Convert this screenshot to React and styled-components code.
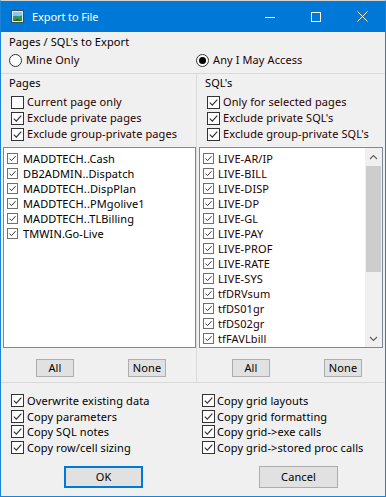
import React from "react";
import styled, { createGlobalStyle } from "styled-components";

const GlobalStyle = createGlobalStyle`
  html, body {
    margin: 0;
    padding: 0;
    background: #ffffff;
  }
  body {
    font-family: "Noto Sans", "Open Sans", sans-serif;
    font-size: 11px;
    letter-spacing: 0.1px;
  }
`;

const Window = styled.div`
  box-sizing: border-box;
  width: 386px;
  height: 497px;
  display: flex;
  flex-direction: column;
  background: #f0f0f0;
  border: 1px solid #1883d7;
  border-top: 1px solid #d4d4d4;
  overflow: hidden;
`;

// title bar

const TitleBar = styled.div`
  flex: none;
  height: 31px;
  display: flex;
  align-items: center;
  background: #0078d7;
  color: #ffffff;
`;

const TitleIcon = styled.svg`
  margin-left: 10px;
  flex: none;
`;

const TitleText = styled.span`
  flex: 1;
  margin-left: 8px;
  font-size: 11px;
  letter-spacing: -0.1px;
  line-height: 16px;
`;

const CaptionButton = styled.div`
  width: 46px;
  height: 31px;
  display: flex;
  align-items: center;
  justify-content: center;
`;

// body

const Body = styled.div`
  flex: 1;
  display: flex;
  flex-direction: column;
  color: #000000;
`;

const ScopeSection = styled.div`
  box-sizing: border-box;
  height: 41px;
  padding: 2px 0 0 8px;
`;

const Heading = styled.div`
  height: 16px;
  line-height: 16px;
  margin-left: ${p => p.$indent || 0}px;
`;

const RadioRow = styled.div`
  display: grid;
  grid-template-columns: 187px 1fr;
  margin-top: 2px;
`;

const RadioOption = styled.label`
  display: flex;
  align-items: center;
  gap: 4px;
  height: 16px;
  line-height: 16px;
  color: #2a0000;
`;

const RadioCircle = styled.span`
  box-sizing: border-box;
  width: 13px;
  height: 13px;
  border-radius: 50%;
  border: 1px solid #333333;
  background: #ffffff;
  display: flex;
  align-items: center;
  justify-content: center;
  flex: none;
  &::after {
    content: "";
    width: 7px;
    height: 7px;
    border-radius: 50%;
    background: ${p => (p.$on ? "#000000" : "transparent")};
  }
`;

const Panels = styled.div`
  display: grid;
  grid-template-columns: 196px 1fr;
  border-top: 1px solid #dadada;
  border-bottom: 1px solid #dadada;
`;

const Panel = styled.div`
  display: flex;
  flex-direction: column;
  padding: 1px 0 5px 2px;
  border-right: ${p => (p.$divider ? "1px solid #dadada" : "none")};
`;

const PanelChecks = styled.div`
  margin: 3px 0 0 8px;
`;

const CheckRow = styled.div`
  display: flex;
  align-items: center;
  gap: ${p => p.$gap || 3}px;
  height: ${p => p.$h || 16}px;
  line-height: ${p => p.$h || 16}px;
  color: ${p => p.$tone || "#000000"};
  white-space: nowrap;
`;

const Box = styled.span`
  box-sizing: border-box;
  width: ${p => p.$size}px;
  height: ${p => p.$size}px;
  border: 1px solid ${p => p.$edge};
  background: #ffffff;
  display: flex;
  align-items: center;
  justify-content: center;
  flex: none;
`;

const ListBox = styled.div`
  box-sizing: border-box;
  width: ${p => p.$w}px;
  height: 201px;
  margin-top: 5px;
  background: #ffffff;
  border: 1px solid #828790;
  display: flex;
  overflow: hidden;
`;

const ListItems = styled.div`
  flex: 1;
  padding: 3px 0 0 3px;
`;

const ScrollBar = styled.div`
  width: 17px;
  display: flex;
  flex-direction: column;
  background: #f0f0f0;
`;

const ScrollArrow = styled.div`
  height: 17px;
  display: flex;
  align-items: center;
  justify-content: center;
  flex: none;
`;

const ScrollTrack = styled.div`
  flex: 1;
  padding-top: 1px;
`;

const ScrollThumb = styled.div`
  height: 106px;
  margin: 0 1px;
  background: #cdcdcd;
`;

const ButtonRow = styled.div`
  display: flex;
  gap: 54px;
  margin: 11px 0 0 33px;
`;

const Button = styled.div`
  box-sizing: border-box;
  width: ${p => p.$w}px;
  height: ${p => p.$h}px;
  display: flex;
  align-items: center;
  justify-content: center;
  background: #e1e1e1;
  border: ${p => (p.$default ? "2px solid #0078d7" : "1px solid #adadad")};
  color: #000000;
  line-height: 16px;
`;

const Options = styled.div`
  display: grid;
  grid-template-columns: 196px 1fr;
  padding-top: 10px;
`;

const OptionColumn = styled.div`
  padding-left: ${p => p.$pad}px;
`;

const FooterCell = styled.div`
  margin: 11px 0 0 ${p => p.$left}px;
`;

const Check = ({ label, on, size = 13, edge = "#333333", tone, h, gap }) => (
  <CheckRow $tone={tone} $h={h} $gap={gap}>
    <Box $size={size} $edge={edge}>
      {on && (
        <svg width={size - 2} height={size - 2} viewBox="0 0 11 11">
          <path d="M1.8 5.6 L4.3 8.1 L9.3 2.6" fill="none" stroke="#333333" strokeWidth="1.2" />
        </svg>
      )}
    </Box>
    {label}
  </CheckRow>
);

const Chevron = ({ up }) => (
  <svg width="9" height="6" viewBox="0 0 9 6">
    <path d={up ? "M1 5 L4.5 1.5 L8 5" : "M1 1 L4.5 4.5 L8 1"} fill="none" stroke="#606060" strokeWidth="1.2" />
  </svg>
);

const pages = [
  "MADDTECH..Cash",
  "DB2ADMIN..Dispatch",
  "MADDTECH..DispPlan",
  "MADDTECH..PMgolive1",
  "MADDTECH..TLBilling",
  "TMWIN.Go-Live",
];

const sqls = [
  "LIVE-AR/IP",
  "LIVE-BILL",
  "LIVE-DISP",
  "LIVE-DP",
  "LIVE-GL",
  "LIVE-PAY",
  "LIVE-PROF",
  "LIVE-RATE",
  "LIVE-SYS",
  "tfDRVsum",
  "tfDS01gr",
  "tfDS02gr",
  "tfFAVLbill",
];

export default function App() {
  return (
    <>
      <GlobalStyle />
      <Window>
        <TitleBar>
          <TitleIcon width="13" height="13" viewBox="0 0 13 13">
            <rect x="0.5" y="0.5" width="12" height="12" fill="#e6e6e6" stroke="#4a4a4a" />
            <rect x="2" y="2" width="9" height="9" fill="#3f86d6" />
            <rect x="2" y="2" width="9" height="4" fill="#8cc4f2" />
            <path d="M2 8 L5 5.5 L8 7.5 L11 5 L11 11 L2 11 Z" fill="#2f9a3a" />
            <path d="M2 11 L6 8.5 L11 11 Z" fill="#1d6e25" />
          </TitleIcon>
          <TitleText>Export to File</TitleText>
          <CaptionButton>
            <svg width="10" height="10" viewBox="0 0 10 10">
              <path d="M0 5.5 H10" stroke="#ffffff" strokeWidth="1" />
            </svg>
          </CaptionButton>
          <CaptionButton>
            <svg width="10" height="10" viewBox="0 0 10 10">
              <rect x="0.5" y="0.5" width="9" height="9" fill="none" stroke="#ffffff" strokeWidth="1" />
            </svg>
          </CaptionButton>
          <CaptionButton>
            <svg width="11" height="11" viewBox="0 0 11 11">
              <path d="M0.5 0.5 L10.5 10.5 M10.5 0.5 L0.5 10.5" stroke="#ffffff" strokeWidth="1" />
            </svg>
          </CaptionButton>
        </TitleBar>

        <Body>
          <ScopeSection>
            <Heading>Pages / SQL's to Export</Heading>
            <RadioRow>
              <RadioOption>
                <RadioCircle />
                Mine Only
              </RadioOption>
              <RadioOption>
                <RadioCircle $on />
                Any I May Access
              </RadioOption>
            </RadioRow>
          </ScopeSection>

          <Panels>
            <Panel $divider>
              <Heading $indent={6}>Pages</Heading>
              <PanelChecks>
                <Check label="Current page only" tone="#2a0000" />
                <Check label="Exclude private pages" on tone="#2a0000" />
                <Check label="Exclude group-private pages" on tone="#2a0000" />
              </PanelChecks>
              <ListBox $w={193}>
                <ListItems>
                  {pages.map(p => (
                    <Check key={p} label={p} on size={11} edge="#707070" h={15} gap={5} />
                  ))}
                </ListItems>
              </ListBox>
              <ButtonRow>
                <Button $w={38} $h={18}>All</Button>
                <Button $w={38} $h={18}>None</Button>
              </ButtonRow>
            </Panel>

            <Panel>
              <Heading $indent={6}>SQL's</Heading>
              <PanelChecks>
                <Check label="Only for selected pages" on tone="#2a0000" />
                <Check label="Exclude private SQL's" on tone="#2a0000" />
                <Check label="Exclude group-private SQL's" on tone="#2a0000" />
              </PanelChecks>
              <ListBox $w={184}>
                <ListItems>
                  {sqls.map(s => (
                    <Check key={s} label={s} on size={11} edge="#707070" h={15} gap={4} tone="#2a0000" />
                  ))}
                </ListItems>
                <ScrollBar>
                  <ScrollArrow>
                    <Chevron up />
                  </ScrollArrow>
                  <ScrollTrack>
                    <ScrollThumb />
                  </ScrollTrack>
                  <ScrollArrow>
                    <Chevron />
                  </ScrollArrow>
                </ScrollBar>
              </ListBox>
              <ButtonRow>
                <Button $w={38} $h={18}>All</Button>
                <Button $w={38} $h={18}>None</Button>
              </ButtonRow>
            </Panel>
          </Panels>

          <Options>
            <OptionColumn $pad={10}>
              <Check label="Overwrite existing data" on h={15.5} />
              <Check label="Copy parameters" on h={15.5} />
              <Check label="Copy SQL notes" on h={15.5} />
              <Check label="Copy row/cell sizing" on h={15.5} />
            </OptionColumn>
            <OptionColumn $pad={5}>
              <Check label="Copy grid layouts" on h={15.5} gap={2} />
              <Check label="Copy grid formatting" on h={15.5} gap={2} />
              <Check label="Copy grid->exe calls" on h={15.5} gap={2} />
              <Check label="Copy grid->stored proc calls" on h={15.5} gap={2} />
            </OptionColumn>
            <FooterCell $left={63}>
              <Button $w={79} $h={22} $default>OK</Button>
            </FooterCell>
            <FooterCell $left={62}>
              <Button $w={79} $h={22}>Cancel</Button>
            </FooterCell>
          </Options>
        </Body>
      </Window>
    </>
  );
}
